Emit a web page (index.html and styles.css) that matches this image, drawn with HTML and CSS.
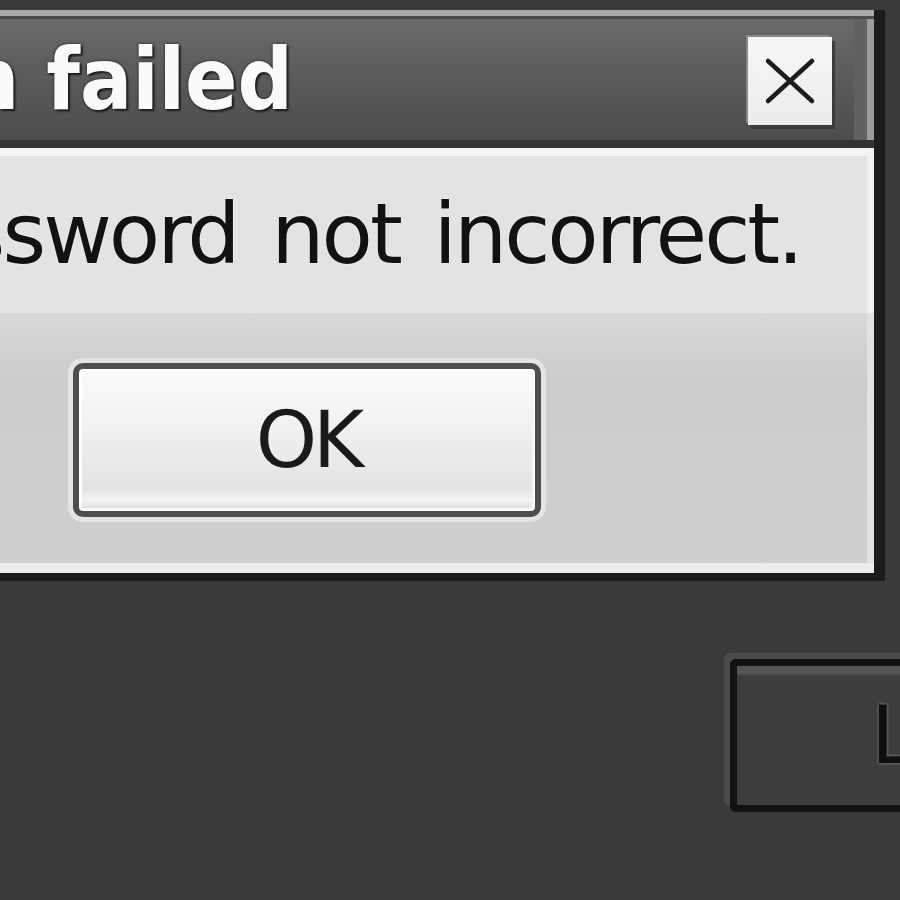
FILE: index.html
```html
<!DOCTYPE html>
<html lang="en">
<head>
<meta charset="utf-8">
<title>Login failed</title>
<link rel="stylesheet" href="styles.css">
</head>
<body>
  <div class="dialog">
    <div class="titlebar">
      <div class="title-wrap"><span class="title">Login failed</span></div>
      <button class="close" aria-label="Close">
        <svg width="52" height="48" viewBox="0 0 52 48"><path d="M4 4 L48 44 M48 4 L4 44" stroke="#1c1c1c" stroke-width="4.5" stroke-linecap="round" fill="none"/></svg>
      </button>
    </div>
    <div class="message"><span class="msg-text">Password not incorrect.</span></div>
    <div class="actions"><button class="ok">OK</button></div>
  </div>
  <div class="below">
    <button class="login">Login</button>
  </div>
</body>
</html>
```
FILE: styles.css
```css
html, body {
  margin: 0;
  padding: 0;
  width: 900px;
  height: 900px;
  overflow: hidden;
  background: #3a3a3a;
}
body {
  font-family: "DejaVu Sans", "Liberation Sans", sans-serif;
}
.dialog {
  margin: 10px 0 0 -20px;
  width: 894px;
  background: #cfcfcf;
  border-right: 11px solid #1c1c1c;
  border-bottom: 8px solid #1c1c1c;
  box-shadow: inset -7px 0 0 #e4e4e4;
  display: flex;
  flex-direction: column;
}
.titlebar {
  height: 124px;
  border-top: 6px solid #a9a9a9;
  border-bottom: 8px solid #333333;
  box-shadow: inset 0 3px 0 #4c4c4c, inset -7px 0 0 #9c9c9c, inset -20px 0 0 #616161;
  background: linear-gradient(#6b6b6b, #5c5c5c 45%, #4d4d4d);
  display: flex;
  align-items: flex-start;
}
.title-wrap {
  width: 313px;
  flex: none;
  padding-top: 1px;
  display: flex;
  justify-content: flex-end;
}
.title {
  white-space: nowrap;
  font-family: "DejaVu Sans Condensed", "DejaVu Sans", sans-serif;
  font-stretch: condensed;
  font-weight: bold;
  font-size: 86px;
  line-height: 124px;
  color: #fafafa;
  text-shadow: 0 0 3px #1e1e1e, 2px 2px 2px #1e1e1e;
}
.close {
  margin: 21px 0 0 455px;
  width: 84px;
  height: 88px;
  padding: 0;
  border: none;
  background: linear-gradient(#f6f6f6, #ececec);
  box-shadow: 3px 4px 0 #3c3c3c, -2px -2px 0 #8a8a8a;
  display: flex;
  align-items: center;
  justify-content: center;
}
.message {
  height: 157px;
  border-top: 8px solid #f3f3f3;
  background: #e3e3e3;
  box-shadow: inset -7px 0 0 #f0f0f0;
  display: flex;
  justify-content: flex-end;
  padding-right: 73px;
}
.msg-text {
  white-space: nowrap;
  font-size: 84px;
  letter-spacing: -3px;
  word-spacing: 10px;
  line-height: 157px;
  color: #121212;
  text-shadow: 0 0 2px #fff;
}
.actions {
  box-sizing: border-box;
  height: 260px;
  border-bottom: 10px solid #ececec;
  background: linear-gradient(#d8d8d8, #cdcdcd 25%, #cfcfcf);
  box-shadow: inset -7px 0 0 #e2e2e2;
  padding: 50px 0 0 93px;
}
.ok {
  width: 468px;
  height: 154px;
  border: 6px solid #4e4e4e;
  border-radius: 10px;
  background: linear-gradient(#fbfbfb, #f1f1f1 40%, #e3e3e3 85%, #f4f4f4 92%, #d9d9d9);
  box-shadow: 0 0 0 5px #e4e4e4, inset 3px 3px 0 #ffffff, inset -3px -3px 0 #f8f8f8;
  font-family: "DejaVu Sans", "Liberation Sans", sans-serif;
  font-size: 78px;
  letter-spacing: -4px;
  color: #1a1a1a;
  padding: 0 0 0 2px;
}
.below {
  display: flex;
  padding: 78px 0 0 730px;
}
.login {
  flex: none;
  width: 300px;
  height: 153px;
  border: 7px solid #121212;
  border-right: none;
  border-radius: 6px 0 0 6px;
  background: #3d3d3d;
  box-shadow: -6px -6px 0 #4a4a4a, inset 0 8px 0 #555555, inset 0 10px 0 #474747;
  padding: 0 0 0 134px;
  text-align: left;
  font-family: "DejaVu Sans", "Liberation Sans", sans-serif;
  font-size: 80px;
  color: #0e0e0e;
  text-shadow: 0 0 3px #9a9a9a;
}
```
